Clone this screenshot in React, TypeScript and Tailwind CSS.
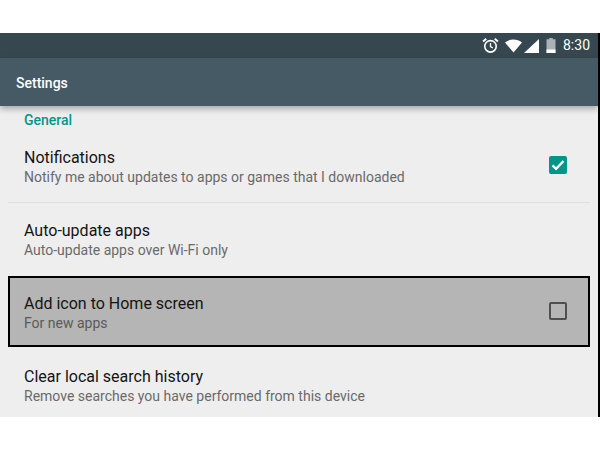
const font = { fontFamily: "Roboto, sans-serif" };

function AlarmIcon() {
  return (
    <svg width="17" height="17" viewBox="0 0 16 16" fill="none" stroke="#fff" strokeWidth="1.500">
      <circle cx="8" cy="8.800" r="5.400" />
      <path d="M8 5.600v3.400l2.200 1.300" strokeWidth="1.200" />
      <path d="M1 4.200 4 1.600M15 4.200 12 1.600" strokeWidth="1.700" />
    </svg>
  );
}

function WifiIcon() {
  return (
    <svg width="19" height="14" viewBox="0 0 18 14">
      <path d="M0.500 3.600C5 -0.600 13 -0.600 17.500 3.600L9 13.500z" fill="#fff" />
    </svg>
  );
}

function SignalIcon() {
  return (
    <svg width="15" height="14" viewBox="0 0 15 14">
      <path d="M15 0v14H0z" fill="#fff" />
    </svg>
  );
}

function BatteryIcon() {
  return (
    <svg width="10" height="15" viewBox="0 0 10 15">
      <path d="M3.200 0h3.600v1.200H9.500V15H.5V1.200h2.700z" fill="#a9b2b6" />
      <path d="M.5 11.500h9V15h-9z" fill="#fff" />
    </svg>
  );
}

function Row({ title, sub, subClass, children }: { title: string; sub: string; subClass?: string; children?: React.ReactNode }) {
  return (
    <div className="flex items-center justify-between w-full">
      <div>
        <div className="text-[16px] leading-[22px] text-[#141414]">{title}</div>
        <div className={subClass ?? "text-[14px] leading-[16px] text-[#6a6a6a]"}>{sub}</div>
      </div>
      {children}
    </div>
  );
}

export default function App() {
  return (
    <div className="w-[600px] h-[450px] bg-white overflow-hidden" style={font}>
      <div className="h-[33px]" />
      <div className="h-[384px] border-r-2 border-black">
        <div className="h-[25px] bg-[#37474f] flex items-center justify-end pr-[8px] text-white">
          <AlarmIcon />
          <div className="ml-[5px]"><WifiIcon /></div>
          <div className="ml-[1px]"><SignalIcon /></div>
          <div className="ml-[7px]"><BatteryIcon /></div>
          <span className="ml-[7px] text-[14px]">8:30</span>
        </div>
        <div className="relative z-10 h-[48px] bg-[#455a64] flex items-center pl-[16px] pt-[2px] shadow-[0_3px_6px_rgba(0,0,0,0.3)]">
          <span className="text-white text-[14px] font-medium">Settings</span>
        </div>
        <div className="h-[311px] bg-[#eeeeee]">
          <div className="pl-[24px] h-[29px] pt-[4px] text-[14px] leading-[20px] font-medium text-[#009688]">General</div>
          <div className="ml-[8px] mr-[8px] h-[68px] pl-[16px] pr-[23px] pt-[12px] border-b border-[#dedede]">
            <Row title="Notifications" sub="Notify me about updates to apps or games that I downloaded">
              <div className="w-[18px] h-[18px] mb-[2px] rounded-[2px] bg-[#009688] flex items-center justify-center">
                <svg width="16" height="16" viewBox="0 0 16 16" fill="none" stroke="#fff" strokeWidth="2.400">
                  <path d="M2.500 8.300l3.600 3.500L13.500 4" />
                </svg>
              </div>
            </Row>
          </div>
          <div className="ml-[8px] mr-[8px] h-[73px] pl-[16px] pr-[23px] pt-[17px]">
            <Row title="Auto-update apps" sub="Auto-update apps over Wi-Fi only" />
          </div>
          <div className="ml-[8px] mr-[8px] h-[71px] pl-[14px] pr-[21px] pt-[15px] border-2 border-black bg-[#b5b5b5]">
            <Row title="Add icon to Home screen" sub="For new apps" subClass="text-[14px] leading-[16px] text-[#5a5a5a]">
              <div className="w-[18px] h-[18px] mb-[2px] rounded-[2px] border-2 border-[#4f4f4f]" />
            </Row>
          </div>
          <div className="ml-[8px] mr-[8px] h-[70px] pl-[16px] pr-[23px] pt-[19px]">
            <Row title="Clear local search history" sub="Remove searches you have performed from this device" />
          </div>
        </div>
      </div>
    </div>
  );
}
